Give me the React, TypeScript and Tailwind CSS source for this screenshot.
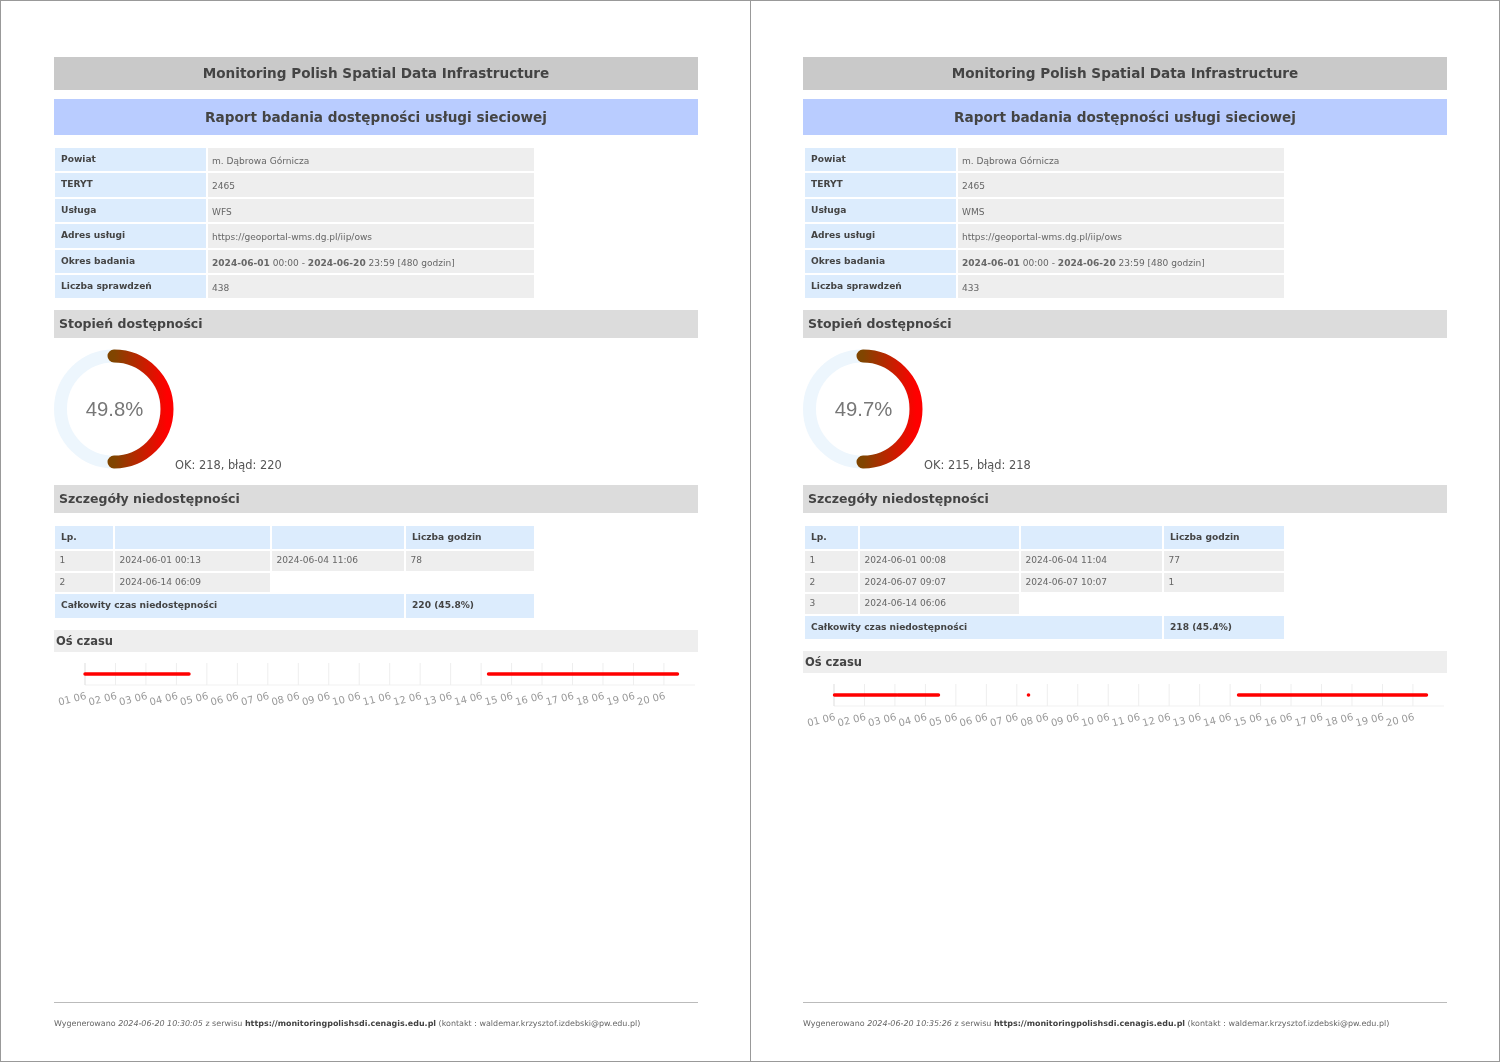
const days = ["01", "02", "03", "04", "05", "06", "07", "08", "09", "10", "11", "12", "13", "14", "15", "16", "17", "18", "19", "20"];

interface Outage {
  start: string;
  end?: string;
  hours?: string;
}

interface Report {
  service: string;
  checks: string;
  percent: string;
  okText: string;
  outages: Outage[];
  total: string;
  generated: string;
  tableClass: string;
  gridClass: string;
  spans: [number, number][];
  dot?: number;
}

const reports: Report[] = [
  {
    service: "WFS",
    checks: "438",
    percent: "49.8%",
    okText: "OK: 218, błąd: 220",
    outages: [
      { start: "2024-06-01 00:13", end: "2024-06-04 11:06", hours: "78" },
      { start: "2024-06-14 06:09" },
    ],
    total: "220 (45.8%)",
    generated: "2024-06-20 10:30:05",
    tableClass: "ml-[1px]",
    gridClass: "grid-cols-[58px_155px_132px_128px]",
    spans: [[31, 93], [94.5, 135], [434.5, 623.5]],
  },
  {
    service: "WMS",
    checks: "433",
    percent: "49.7%",
    okText: "OK: 215, błąd: 218",
    outages: [
      { start: "2024-06-01 00:08", end: "2024-06-04 11:04", hours: "77" },
      { start: "2024-06-07 09:07", end: "2024-06-07 10:07", hours: "1" },
      { start: "2024-06-14 06:06" },
    ],
    total: "218 (45.4%)",
    generated: "2024-06-20 10:35:26",
    tableClass: "ml-[2px]",
    gridClass: "grid-cols-[53px_159px_141px_120px]",
    spans: [[31.5, 93.5], [95, 135.5], [435.5, 623.5]],
    dot: 225.5,
  },
];

function Donut({ percent }: { percent: string }) {
  return (
    <svg width="120" height="120" viewBox="0 0 120 120" className="shrink-0">
      <defs>
        <linearGradient id="arc" x1="0" y1="0" x2="1" y2="0">
          <stop offset="0" stopColor="#804500" />
          <stop offset="1" stopColor="#ff0000" />
        </linearGradient>
      </defs>
      <circle cx="59.5" cy="60" r="53" fill="none" stroke="#edf6fd" strokeWidth="13" />
      <path d="M60 7 A53 53 0 0 1 60 113" fill="none" stroke="url(#arc)" strokeWidth="13" strokeLinecap="round" />
      <text x="60.5" y="67" textAnchor="middle" fontSize="20.3" fill="#777" fontFamily="'Liberation Sans', sans-serif">
        {percent}
      </text>
    </svg>
  );
}

function Timeline({ spans, dot }: { spans: [number, number][]; dot?: number }) {
  return (
    <svg width="644" height="60" viewBox="0 0 644 60" className="mt-[11px] block">
      <line x1="31" y1="22" x2="641" y2="22" stroke="#f1f1f1" />
      {days.map((day, i) => {
        const x = 31 + i * 30.47;
        return (
          <g key={day}>
            <line x1={x} y1="0" x2={x} y2="22" stroke={i === 0 ? "#ddd" : "#eee"} />
            <text
              x={x + 1}
              y="36"
              textAnchor="end"
              fontSize="10"
              fill="#999"
              transform={`rotate(-14 ${x} 32)`}
              fontFamily="'DejaVu Sans', sans-serif"
            >
              {day} 06
            </text>
          </g>
        );
      })}
      {spans.map(([a, b]) => (
        <line key={a} x1={a} y1="11" x2={b} y2="11" stroke="#f00" strokeWidth="3.4" strokeLinecap="round" />
      ))}
      {dot !== undefined && <circle cx={dot} cy="11" r="1.8" fill="#f00" />}
    </svg>
  );
}

function InfoRow({ label, children }: { label: string; children: React.ReactNode }) {
  return (
    <>
      <div className="h-[23.4px] bg-[#dcecfd] pl-[6px] pt-[4px] text-[9.1px] leading-[15px] font-bold text-[#444]">{label}</div>
      <div className="h-[23.4px] bg-[#eeeeee] pl-[4px] pt-[6px] text-[9.05px] leading-[15px] text-[#666]">{children}</div>
    </>
  );
}

function Page({ report, className }: { report: Report; className: string }) {
  const head = "h-[23.4px] bg-[#dcecfd] pl-[6px] pt-[4px] text-[9.1px] leading-[15px] font-bold text-[#444]";
  const cell = "h-[19.6px] bg-[#eeeeee] pl-[4.5px] pt-[2px] text-[9.05px] leading-[15px] text-[#666]";

  return (
    <section className={`flex h-[1062px] flex-col border-[#999] pt-[56px] ${className}`}>
      <div className="flex h-[33px] w-[644px] items-center justify-center bg-[#c9c9c9] text-[13.6px] font-bold text-[#444]">
        Monitoring Polish Spatial Data Infrastructure
      </div>
      <div className="mt-[9px] flex h-[36px] w-[644px] items-center justify-center bg-[#b9ccff] text-[13.6px] font-bold text-[#444]">
        Raport badania dostępności usługi sieciowej
      </div>

      <div className={`mt-[13px] grid w-[480px] grid-cols-[151px_326px] gap-[2px] ${report.tableClass}`}>
        <InfoRow label="Powiat">m. Dąbrowa Górnicza</InfoRow>
        <InfoRow label="TERYT">2465</InfoRow>
        <InfoRow label="Usługa">{report.service}</InfoRow>
        <InfoRow label="Adres usługi">https://geoportal-wms.dg.pl/iip/ows</InfoRow>
        <InfoRow label="Okres badania">
          <b>2024-06-01</b> 00:00 - <b>2024-06-20</b> 23:59 [480 godzin]
        </InfoRow>
        <InfoRow label="Liczba sprawdzeń">{report.checks}</InfoRow>
      </div>

      <h2 className="mt-[11.5px] h-[28px] w-[644px] bg-[#dcdcdc] pl-[5px] text-[12.5px] leading-[28px] font-bold text-[#444]">
        Stopień dostępności
      </h2>
      <div className="mt-[11px] flex h-[120px] items-end">
        <Donut percent={report.percent} />
        <span className="mb-[-4px] ml-[1px] text-[11.4px] leading-[16px] text-[#555]">{report.okText}</span>
      </div>
      <h2 className="mt-[16px] h-[28px] w-[644px] bg-[#dcdcdc] pl-[5px] text-[12.5px] leading-[28px] font-bold text-[#444]">
        Szczegóły niedostępności
      </h2>

      <div className={`mt-[13px] grid w-[480px] gap-[2px] ${report.tableClass} ${report.gridClass}`}>
        <div className={head}>Lp.</div>
        <div className={head} />
        <div className={head} />
        <div className={head}>Liczba godzin</div>
        {report.outages.map((o, i) => (
          <div key={o.start} className="contents">
            <div className={cell}>{i + 1}</div>
            <div className={cell}>{o.start}</div>
            {o.end ? <div className={cell}>{o.end}</div> : <div />}
            {o.hours ? <div className={cell}>{o.hours}</div> : <div />}
          </div>
        ))}
        <div className={`col-span-3 ${head}`}>Całkowity czas niedostępności</div>
        <div className={head}>{report.total}</div>
      </div>

      <h3 className="mt-[12px] h-[22px] w-[644px] bg-[#eeeeee] pl-[2px] text-[11.5px] leading-[22px] font-bold text-[#444]">
        Oś czasu
      </h3>
      <Timeline spans={report.spans} dot={report.dot} />

      <footer className="mt-auto mb-[31px] w-[644px] border-t border-[#bbb] pt-[14px] text-[7.97px] leading-[13px] whitespace-nowrap text-[#666]">
        Wygenerowano <i>{report.generated}</i> z serwisu{" "}
        <b className="text-[#444]">https://monitoringpolishsdi.cenagis.edu.pl</b> (kontakt : waldemar.krzysztof.izdebski@pw.edu.pl)
      </footer>
    </section>
  );
}

export default function App() {
  return (
    <main className="flex h-[1062px] w-[1500px] overflow-hidden bg-white font-['DejaVu_Sans',sans-serif] blur-[0.5px]">
      <Page report={reports[0]} className="w-[751px] border pl-[53px]" />
      <Page report={reports[1]} className="w-[749px] border-y border-r pl-[52px]" />
    </main>
  );
}
